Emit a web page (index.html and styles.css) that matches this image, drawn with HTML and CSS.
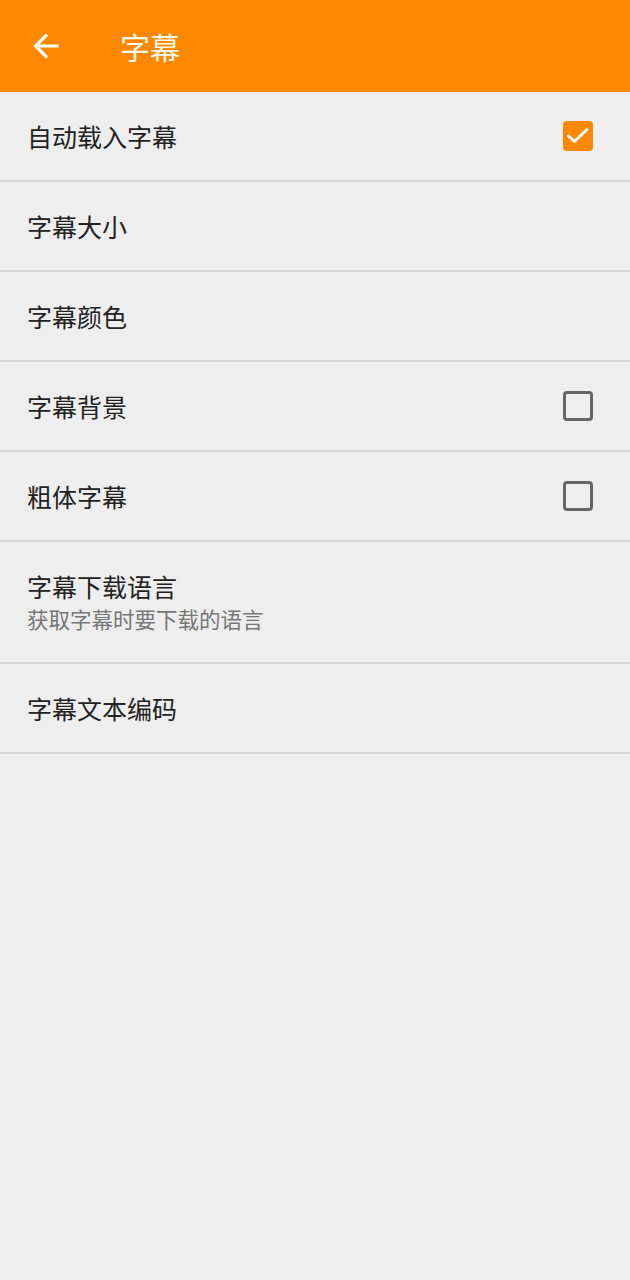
FILE: index.html
```html
<!DOCTYPE html>
<html lang="zh-CN">
<head>
<meta charset="utf-8">
<link rel="stylesheet" href="styles.css">
</head>
<body>
<header class="appbar">
  <svg class="back" viewBox="0 0 24 24" width="38" height="38"><path d="M20 11H7.83l5.59-5.59L12 4l-8 8 8 8 1.41-1.41L7.83 13H20v-2z" fill="#fff"/></svg>
  <div class="title">字幕</div>
</header>
<main class="list">
  <div class="row"><div class="text"><div class="main">自动载入字幕</div></div><div class="cb checked"><svg viewBox="0 0 30 30" width="30" height="30"><path d="M5.5 15L11.5 20.5L24 8.5" fill="none" stroke="#fff" stroke-width="3" stroke-linecap="round" stroke-linejoin="round"/></svg></div></div>
  <div class="row"><div class="text"><div class="main">字幕大小</div></div></div>
  <div class="row"><div class="text"><div class="main">字幕颜色</div></div></div>
  <div class="row"><div class="text"><div class="main">字幕背景</div></div><div class="cb"></div></div>
  <div class="row"><div class="text"><div class="main">粗体字幕</div></div><div class="cb"></div></div>
  <div class="row tall"><div class="text"><div class="main">字幕下载语言</div><div class="sub">获取字幕时要下载的语言</div></div></div>
  <div class="row"><div class="text"><div class="main">字幕文本编码</div></div></div>
</main>
</body>
</html>
```
FILE: styles.css
```css
html, body {
  margin: 0;
  padding: 0;
  background: #eeeeee;
  font-family: "Noto Sans CJK SC", "Noto Sans", sans-serif;
}
.appbar {
  height: 92px;
  background: #ff8800;
  display: flex;
  align-items: center;
  padding-left: 27px;
  box-sizing: border-box;
}
.back {
  display: block;
  flex: none;
}
.title {
  margin-left: 55px;
  color: #fffaf0;
  font-size: 30px;
  font-weight: 400;
  line-height: 1;
}
.row {
  height: 88px;
  border-bottom: 2px solid #d5d5d5;
  display: flex;
  align-items: center;
  padding: 0 37px 0 27px;
}
.row.tall {
  height: 120px;
}
.text {
  flex: 1;
}
.main {
  font-size: 25px;
  color: #222;
  line-height: 34px;
}
.sub {
  font-size: 21.5px;
  color: #777;
  line-height: 32px;
  letter-spacing: 0;
}
.cb {
  width: 30px;
  height: 30px;
  box-sizing: border-box;
  border: 3px solid #666;
  border-radius: 4px;
  position: relative;
}
.cb.checked {
  background: #ff8800;
  border: none;
}
.cb svg {
  display: block;
}
```
